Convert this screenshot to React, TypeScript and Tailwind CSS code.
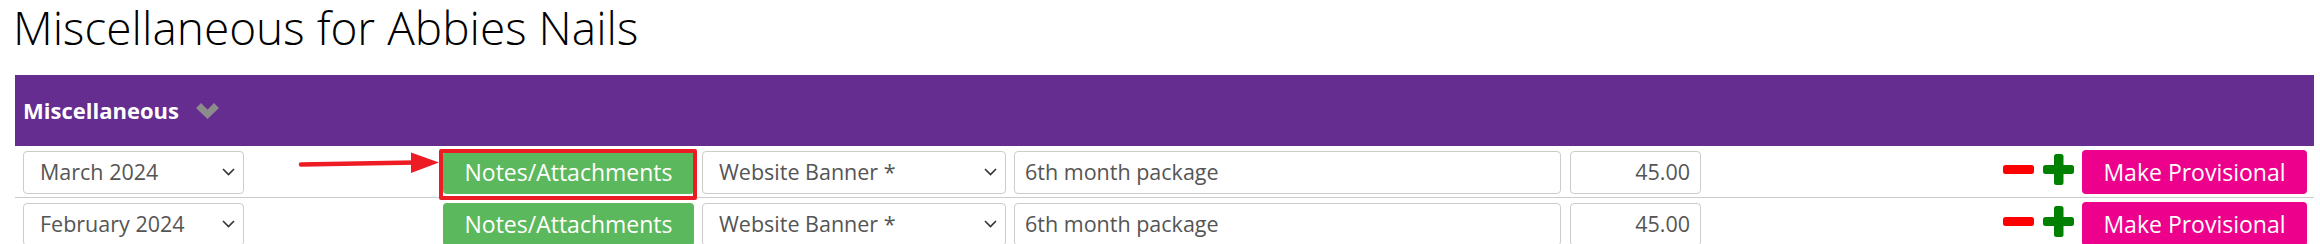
import React from "react";

type Row = { month: string; highlight?: boolean };

const ROWS: Row[] = [
  { month: "March 2024", highlight: true },
  { month: "February 2024" },
];

function SelectArrow() {
  return (
    <svg width="13" height="8" viewBox="0 0 13 8" className="shrink-0">
      <polyline points="1,1 6.5,6.5 12,1" fill="none" stroke="#333" strokeWidth="1.6" />
    </svg>
  );
}

function FakeSelect({ value, className }: { value: string; className: string }) {
  return (
    <div
      className={`flex h-[43px] items-center justify-between rounded-[4px] border border-[#ccc] bg-white pl-[16px] pr-[8px] text-[21.5px] text-[#555] ${className}`}
    >
      <span className="whitespace-nowrap">{value}</span>
      <SelectArrow />
    </div>
  );
}

function MiscRow({ month, highlight }: Row) {
  return (
    <div className="relative flex items-center border-b border-[#ccc] pb-[3px] pl-2 pr-[7px] pt-1">
      <FakeSelect value={month} className="w-[221px]" />

      {/* annotation arrow */}
      {highlight && (
        <svg width="143" height="22" viewBox="0 0 143 22" className="absolute left-[282px] top-[6px]">
          <line x1="4" y1="12.5" x2="118" y2="10.5" stroke="#ed1c24" strokeWidth="4.5" strokeLinecap="round" />
          <polygon points="114,0.5 142,10.5 114,21" fill="#ed1c24" />
        </svg>
      )}

      <div className="relative ml-[199px] w-[251px]">
        <button className="flex h-[43px] w-full items-center justify-center rounded-[4px] bg-[#5cb85c] text-[23px] text-white">
          Notes/Attachments
        </button>
        {highlight && (
          <div className="absolute -bottom-[6px] -left-1 -right-[3px] -top-[2px] rounded-[2px] border-4 border-[#ed1c24]" />
        )}
      </div>

      <FakeSelect value="Website Banner *" className="ml-2 w-[304px]" />

      <div className="ml-2 flex h-[43px] w-[547px] items-center rounded-[4px] border border-[#ccc] bg-white px-[10px] text-[21.5px] text-[#555]">
        6th month package
      </div>

      <div className="ml-[9px] flex h-[43px] w-[131px] items-center justify-end rounded-[4px] border border-[#ccc] bg-white px-[10px] text-[21.5px] text-[#555]">
        45.00
      </div>

      <div className="mb-[6px] ml-auto flex items-center">
        <svg width="31" height="9" viewBox="0 0 31 9">
          <rect x="0" y="0" width="31" height="9" rx="2.5" fill="#ff0000" />
        </svg>
        <svg width="31" height="31" viewBox="0 0 31 31" className="ml-[9px]">
          <rect x="11" y="0" width="9.5" height="31" rx="2.5" fill="#008000" />
          <rect x="0" y="11" width="31" height="9" rx="2.5" fill="#008000" />
        </svg>
      </div>

      <button className="ml-2 flex h-[44px] w-[225px] items-center justify-center rounded-[4px] bg-[#ec008c] text-[23px] text-white">
        Make Provisional
      </button>
    </div>
  );
}

export default function App() {
  return (
    <div className="h-[244px] w-[2320px] overflow-hidden bg-white font-['Open_Sans',sans-serif]">
      <h1 className="mb-[21px] pl-[13px] font-['Open_Sans_Light','Open_Sans',sans-serif] text-[46px] font-light leading-[54px] text-black">
        Miscellaneous for Abbies Nails
      </h1>

      <div className="ml-[15px] w-[2299px]">
        <div className="flex h-[71px] items-center gap-[17px] bg-[#652d90] pl-2">
          <span className="text-[22px] font-bold text-white">Miscellaneous</span>
          <svg width="23" height="16" viewBox="0 0 23 16">
            <polygon points="0,5 5,0 11.5,6.5 18,0 23,5 11.5,16" fill="#8c8c8c" />
          </svg>
        </div>

        {ROWS.map((r) => (
          <MiscRow key={r.month} {...r} />
        ))}
      </div>
    </div>
  );
}
